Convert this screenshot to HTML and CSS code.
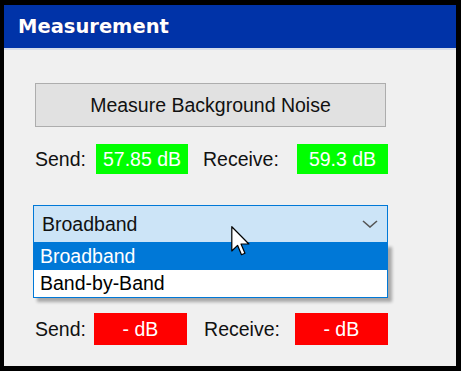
FILE: index.html
```html
<!DOCTYPE html>
<html>
  <head>
    <meta charset="UTF-8">
    <title>Measurement</title>
    <link rel="stylesheet" href="styles.css">
  </head>
  <body>
    <div class="frame">
      <header>
        <h1>Measurement</h1>
      </header>

      <div class="content">
        <button class="button" type="button">Measure Background Noise</button>

        <div class="level-row">
          <span class="label send-label">Send:</span>
          <span class="level ok send-box">57.85 dB</span>
          <span class="label receive-label">Receive:</span>
          <span class="level ok receive-box">59.3 dB</span>
        </div>

        <div class="select-wrap">
          <div class="select">
            <span>Broadband</span>
            <svg class="chevron" width="16" height="8" viewBox="0 0 16 8">
              <path d="M1 1 L8 7 L15 1" fill="none" stroke="#555" stroke-width="1.6"/>
            </svg>
          </div>
          <ul class="options">
            <li class="selected">Broadband</li>
            <li>Band-by-Band</li>
          </ul>
          <svg class="cursor" width="19" height="31" viewBox="0 0 12.5 20.5">
            <path d="M0.5 0.5 L0.5 16.5 L4.3 12.8 L6.9 19 L9.2 18 L6.6 11.9 L11.8 11.9 Z" fill="#fff" stroke="#000" stroke-width="0.8" stroke-linejoin="round"/>
          </svg>
        </div>

        <div class="level-row band-row">
          <span class="label send-label">Send:</span>
          <span class="level bad send-box">- dB</span>
          <span class="label receive-label">Receive:</span>
          <span class="level bad receive-box">- dB</span>
        </div>
      </div>
    </div>
  </body>
</html>
```

FILE: styles.css
```css
body {
  margin: 0;
  padding: 0;
  background-color: #fff;
  font-family: 'Liberation Sans', Arial, sans-serif;
}
.frame {
  width: 461px;
  height: 371px;
  box-sizing: border-box;
  border: 5px solid #000;
  border-left-width: 4px;
  background-color: #f0f0f0;
}
header {
  height: 43px;
  background-color: #0033a8;
  border-bottom: 2px solid #d5dcea;
  display: flex;
  align-items: center;
  padding-left: 14px;
}
header h1 {
  margin: 0;
  color: #fff;
  font-family: 'DejaVu Sans', sans-serif;
  font-weight: bold;
  font-size: 19.5px;
  text-shadow: 0 0 1px rgba(60, 0, 60, 0.6);
}
.content {
  padding-left: 31px;
  display: flex;
  flex-direction: column;
  align-items: flex-start;
}
.button {
  margin-top: 33px;
  width: 351px;
  height: 44px;
  background-color: #e1e1e1;
  border: 1px solid #adadad;
  font-family: 'Liberation Sans', Arial, sans-serif;
  font-size: 19.5px;
  color: #111;
  padding: 0;
}
.level-row {
  margin-top: 17px;
  height: 30px;
  display: flex;
  align-items: stretch;
  width: 353px;
}
.label {
  font-size: 19.5px;
  color: #111;
  display: flex;
  align-items: center;
}
.send-label {
  width: 61px;
}
.receive-label {
  margin-left: 15px;
  width: 94px;
}
.level {
  display: flex;
  align-items: center;
  justify-content: center;
  color: #fff;
  font-size: 19.5px;
}
.ok {
  background-color: #00ff00;
}
.ok.send-box {
  width: 92px;
}
.ok.receive-box {
  width: 91px;
}
.select-wrap {
  position: relative;
  margin-top: 31px;
  margin-left: -2px;
}
.select {
  width: 355px;
  height: 38px;
  box-sizing: border-box;
  background-color: #cce4f7;
  border: 1px solid #0078d7;
  display: flex;
  align-items: center;
  justify-content: space-between;
  padding: 0 9px 0 8px;
  font-size: 19.5px;
  color: #111;
}
.options {
  position: absolute;
  left: 0;
  top: 38px;
  width: 355px;
  box-sizing: border-box;
  margin: 0;
  padding: 0;
  list-style: none;
  border: 1px solid #0078d7;
  border-top: none;
  background-color: #fff;
  box-shadow: 4px 4px 3px rgba(0, 0, 0, 0.3);
  font-size: 19.5px;
  z-index: 1;
}
.options li {
  height: 27px;
  padding-left: 6px;
  display: flex;
  align-items: center;
  color: #000;
}
.options li.selected {
  background-color: #0078d7;
  color: #fff;
}
.cursor {
  position: absolute;
  left: 198px;
  top: 21px;
  z-index: 2;
}
.band-row {
  margin-top: 70px;
  height: 32px;
}
.bad {
  background-color: #ff0000;
}
.bad.send-box {
  width: 94px;
  margin-left: -2px;
}
.bad.receive-box {
  width: 94px;
  margin-left: -3px;
}
.band-row .receive-label {
  margin-left: 17px;
}
```
